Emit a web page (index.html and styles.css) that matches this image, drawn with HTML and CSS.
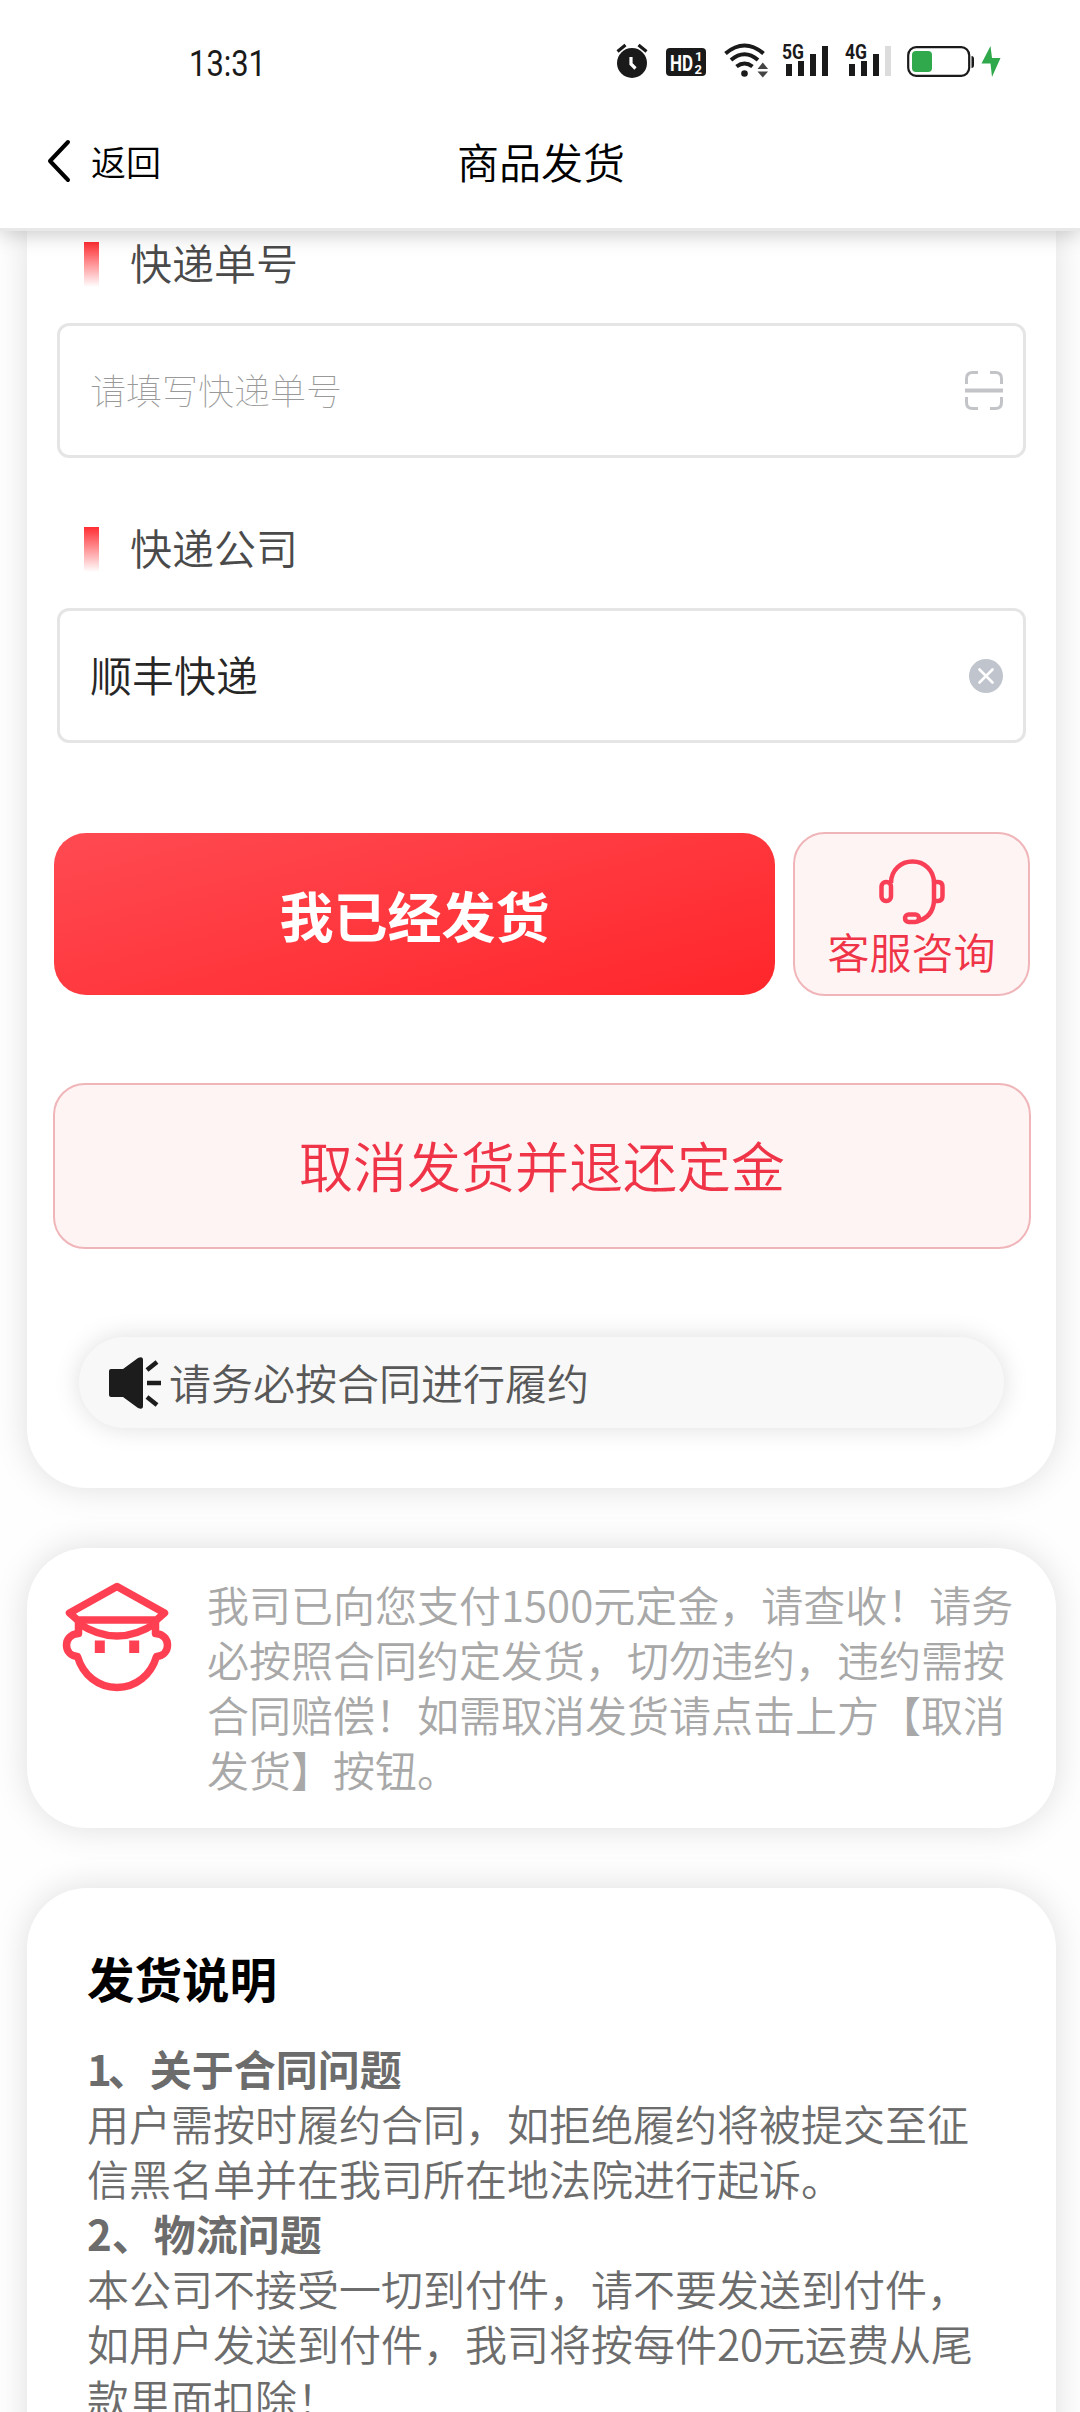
FILE: index.html
```html
<!DOCTYPE html>
<html lang="zh-CN">
<head>
<meta charset="utf-8">
<title>商品发货</title>
<link rel="stylesheet" href="styles.css">
</head>
<body>
<div class="screen">
  <header class="header">
    <div class="status-bar">
      <svg class="clock" width="80" height="36" viewBox="0 0 80 36"><text x="1" y="33.500" textLength="77" lengthAdjust="spacingAndGlyphs">13:31</text></svg>
      <div class="status-icons">
        <svg width="34" height="36" viewBox="615 42 34 36">
          <circle cx="632" cy="63" r="15" fill="#1a1a1a"/>
          <path d="M617.500 51.500l8-6.500M646.500 51.500l-8-6.500" stroke="#1a1a1a" stroke-width="3.200" fill="none"/>
          <path d="M631 57v7l4.500 4.500" stroke="#fff" stroke-width="3.200" fill="none"/>
        </svg>
        <svg class="hd" width="40" height="36" viewBox="666 42 40 36">
          <rect x="666" y="48" width="40" height="28" rx="4" fill="#1a1a1a"/>
          <text x="670" y="70.500" font-size="22" textLength="23" lengthAdjust="spacingAndGlyphs">HD</text>
          <text x="695" y="61" font-size="13">1</text>
          <text x="694.500" y="73.500" font-size="13">2</text>
        </svg>
        <svg class="wifi" width="46" height="36" viewBox="724 42 46 36">
          <circle cx="744.500" cy="73.500" r="3.300" fill="#1a1a1a"/>
          <path d="M725.500 53.500Q744.500 37.500 763.500 53.500M731 60Q744.500 48.500 758 60M736.500 66.500Q744.500 60.500 752.500 66.500" fill="none" stroke="#1a1a1a" stroke-width="4"/>
          <path d="M757.500 69l5.300-6.500 5.300 6.500zM757.500 71.500h10.600l-5.300 6z" fill="#444"/>
        </svg>
        <svg class="signal" width="48" height="36" viewBox="781 42 48 36">
          <text x="782" y="59" textLength="22" lengthAdjust="spacingAndGlyphs">5G</text>
          <path d="M786 64h6v12h-6zM798 61h6v15h-6zM810 54h6v22h-6zM822 46h6v30h-6z" fill="#1a1a1a"/>
        </svg>
        <svg class="signal signal-4g" width="48" height="36" viewBox="844 42 48 36">
          <text x="845" y="59" textLength="22" lengthAdjust="spacingAndGlyphs">4G</text>
          <path d="M849 64h6v12h-6zM861 61h6v15h-6zM873 54h6v22h-6z" fill="#1a1a1a"/>
          <path d="M885 46h6v30h-6z" fill="#dcdcdc"/>
        </svg>
        <svg class="battery" width="94" height="36" viewBox="907 42 94 36">
          <rect x="908.200" y="47.200" width="61" height="28.600" rx="8" fill="none" stroke="#1a1a1a" stroke-width="2.200"/>
          <path d="M971.500 56q2.500 0 2.500 3v6q0 3-2.500 3z" fill="#1a1a1a"/>
          <rect x="912" y="51" width="20" height="21" rx="4" fill="#30a84c"/>
          <path d="M990.500 46l-9 17.500h9l1.500 13.500 8.500-19h-8.500z" fill="#30a84c"/>
        </svg>
      </div>
    </div>
    <nav class="nav">
      <a class="back">
        <svg width="25" height="44" viewBox="0 0 25 44"><path d="M22 3L4 22L22 41" fill="none" stroke="#000" stroke-width="4" stroke-linecap="round" stroke-linejoin="round"/></svg>
        <span>返回</span>
      </a>
      <h1 class="nav-title">商品发货</h1>
    </nav>
  </header>

  <main class="content">
    <section class="card form-card">
      <label class="field-label">快递单号</label>
      <div class="field">
        <span class="placeholder">请填写快递单号</span>
        <svg width="38" height="39" viewBox="0 0 38 39"><path d="M1.500 13V7.500q0-6 6-6H13M25 1.500h5.500q6 0 6 6V13M1.500 26v5.500q0 6 6 6H13M25 37.500h5.500q6 0 6-6V26" fill="none" stroke="#c2c4c8" stroke-width="3"/><path d="M0 19.500h38" stroke="#c2c4c8" stroke-width="4"/></svg>
      </div>
      <label class="field-label">快递公司</label>
      <div class="field">
        <span>顺丰快递</span>
        <svg width="34" height="34" viewBox="0 0 34 34"><circle cx="17" cy="17" r="17" fill="#c0c4cc"/><path d="M10.500 10.500l13 13M23.500 10.500l-13 13" stroke="#fff" stroke-width="2.600" stroke-linecap="round"/></svg>
      </div>
      <div class="actions">
        <button class="btn primary">我已经发货</button>
        <button class="btn support">
          <svg width="66" height="66" viewBox="0 0 66 66" fill="none" stroke="#f93f56" stroke-width="4.500">
            <path d="M12 24C12 11 22 2.500 33.500 2.500S55 11 55 24V42q-1 16-17 20.500"/>
            <rect x="2.500" y="23" width="9.500" height="19" rx="4.500"/>
            <path d="M55 23h4q4.500 0 4.500 5v9q0 5-4.500 5h-4"/>
            <rect x="26" y="55.500" width="14" height="7.500" rx="3.700"/>
          </svg>
          <span>客服咨询</span>
        </button>
      </div>
      <button class="btn cancel">取消发货并退还定金</button>
      <div class="notice">
        <svg width="52" height="52" viewBox="0 0 52 52"><path d="M0 14q0-2 2-2h12L29 1q5-2 5 2v46q0 4-5 2L14 40H2q-2 0-2-2z" fill="#1c1c1c"/><path d="M38 13l10-8M38 26h14M38 40l10 8" stroke="#1c1c1c" stroke-width="4.500"/></svg>
        <span>请务必按合同进行履约</span>
      </div>
    </section>

    <section class="card tip-card">
      <svg width="110" height="112" viewBox="0 0 110 112" fill="none" stroke="#ff3f52" stroke-width="7.500" stroke-linejoin="round">
        <path d="M55 4.500L7.500 31l8 7h79l8-7z"/>
        <path d="M16 41q39 26 78 0"/>
        <path d="M16.500 39v12.500C8 52 4.500 58 4.500 63c0 6 4 11 11 11.500C21 93 36 105.500 55 105.500S89 93 94.500 74.500c7-.5 11-5.500 11-11.500 0-5-3.500-11-12-11.500V39"/>
        <path d="M37.800 58.500v12.500M72.200 58.500v12.500" stroke-width="10"/>
      </svg>
      <p>我司已向您支付1500元定金，请查收！请务<br>必按照合同约定发货，切勿违约，违约需按<br>合同赔偿！如需取消发货请点击上方【取消<br>发货】按钮。</p>
    </section>

    <section class="card guide-card">
      <h2>发货说明</h2>
      <h3><span class="num-one">1</span>、关于合同问题</h3>
      <p>用户需按时履约合同，如拒绝履约将被提交至征<br>信黑名单并在我司所在地法院进行起诉。</p>
      <h3>2、物流问题</h3>
      <p>本公司不接受一切到付件，请不要发送到付件，<br>如用户发送到付件，我司将按每件20元运费从尾<br>款里面扣除！</p>
    </section>
  </main>
</div>
</body>
</html>
```
FILE: styles.css
```css
* {
  box-sizing: border-box;
  margin: 0;
  padding: 0;
}

body {
  background: #fefefe;
  font-family: "Noto Sans CJK SC", sans-serif;
  font-size: 42px;
  font-weight: 350;
  font-kerning: none;
}

svg {
  display: block;
  flex: none;
  overflow: visible;
}

.screen {
  height: 2412px;
  overflow: hidden;
}

.header {
  position: relative;
  z-index: 2;
  height: 231px;
  background: #fff;
  border-bottom: 3px solid #e8e8e8;
  box-shadow: 0 3px 20px rgba(0, 0, 0, 0.22);
}

.status-bar {
  display: flex;
  justify-content: space-between;
  padding: 42px 79px 0 188px;
  height: 98px;
}

.clock text {
  font: 400 37px "Roboto", sans-serif;
  fill: #1a1a1a;
}

.status-icons {
  display: flex;
}

.hd {
  margin-left: 17px;
}

.hd text {
  font-family: "Roboto", sans-serif;
  font-weight: 700;
  fill: #fff;
}

.wifi {
  margin-left: 18px;
}

.signal {
  margin-left: 11px;
}

.signal text {
  font: 700 21px "Roboto", sans-serif;
  fill: #1a1a1a;
}

.signal-4g,
.battery {
  margin-left: 15px;
}

.nav {
  display: grid;
  grid-template-columns: 1fr auto 1fr;
  align-items: center;
  height: 125px;
  padding: 0 44px 0 46px;
  color: #000;
}

.back {
  display: flex;
  align-items: center;
  gap: 20px;
  font-size: 35px;
}

.nav-title {
  font-size: 42px;
  font-weight: 350;
}

.content {
  display: flex;
  flex-direction: column;
  gap: 60px;
  padding: 0 24px 0 27px;
}

.card {
  background: #fff;
  border-radius: 60px;
  box-shadow: 0 0 34px rgba(0, 0, 0, 0.13);
}

.form-card {
  height: 1257px;
  padding: 0 26px;
  border-radius: 0 0 60px 60px;
}

.field-label {
  display: flex;
  align-items: flex-start;
  gap: 31px;
  height: 92px;
  padding: 0 31px;
  line-height: 61px;
  color: #4a4a4a;
}

.field-label::before {
  content: "";
  width: 15px;
  height: 45px;
  margin-top: 11px;
  background: linear-gradient(#ff2d32, #fff);
}

.field {
  display: flex;
  align-items: center;
  justify-content: space-between;
  height: 135px;
  margin: 0 4px;
  padding: 0 20px 0 30px;
  border: 3px solid #e5e5e5;
  border-radius: 12px;
  color: #262626;
}

.field span {
  padding-bottom: 4px;
}

.field + .field-label {
  margin-top: 58px;
}

.placeholder {
  font-size: 36px;
  font-weight: 100;
  color: #999;
}

.btn {
  display: flex;
  align-items: center;
  justify-content: center;
  border: 0;
  border-radius: 32px;
  font: 350 54px "Noto Sans CJK SC", sans-serif;
}

.actions {
  display: flex;
  align-items: center;
  justify-content: space-between;
  margin-top: 89px;
  padding-left: 1px;
}

.primary {
  width: 721px;
  height: 162px;
  background: linear-gradient(165deg, #ff4a52, #ff262a);
  color: #fff;
  font-weight: 700;
}

.support,
.cancel {
  background: #fff4f4;
  border: 2px solid #f0b5b9;
  color: #ef3448;
}

.support {
  flex-direction: column;
  width: 237px;
  height: 164px;
  padding-top: 7px;
  font-size: 42px;
  line-height: 51px;
}

.cancel {
  width: 978px;
  height: 166px;
  margin-top: 87px;
  padding-bottom: 3px;
}

.notice {
  display: flex;
  align-items: center;
  gap: 8px;
  width: 925px;
  height: 91px;
  margin: 88px 0 0 26px;
  padding-left: 30px;
  background: #f8f8f8;
  border-radius: 46px;
  box-shadow: 0 0 26px rgba(30, 0, 0, 0.13);
  color: #585858;
}

.notice span {
  padding-bottom: 3px;
}

.tip-card {
  display: flex;
  gap: 35px;
  height: 280px;
  padding: 28px 0 0 35px;
  color: #a8a8a8;
  line-height: 55px;
}

.tip-card svg {
  margin-top: 6px;
}

.tip-card p {
  white-space: nowrap;
}

.guide-card {
  height: 720px;
  padding: 51px 60px 0;
  color: #6c6c6c;
  line-height: 55px;
  white-space: nowrap;
}

.guide-card h2 {
  height: 101px;
  font-size: 47.5px;
  line-height: 78px;
  color: #000;
}

.guide-card h3 {
  font-size: 42px;
}

.guide-card p {
  font-size: 42px;
}

.num-one {
  letter-spacing: -4px;
}
```
